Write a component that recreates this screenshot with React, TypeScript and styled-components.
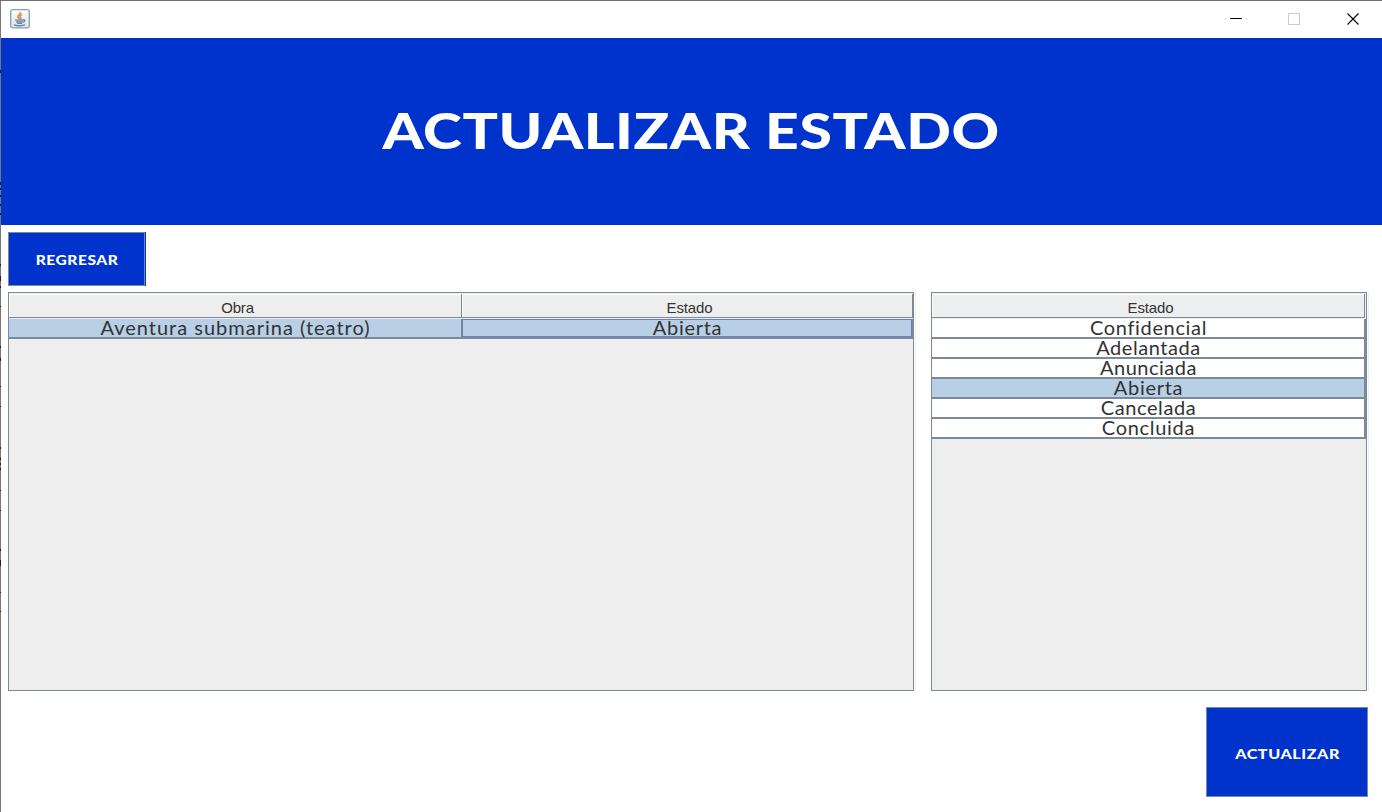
import React from "react";
import styled, { createGlobalStyle } from "styled-components";

const BLUE = "#0033cc";
const LINE = "#7a8a99";
const EDGE = "#777";

/* Rows where darker content behind the window shows at its left edge: [top, height] */
const edgeMarks = [
  [69, 3], [181, 3], [187, 2], [194, 2], [203, 2], [212, 2], [263, 2], [275, 5],
  [285, 2], [305, 1], [345, 2], [357, 3], [385, 1], [405, 1], [446, 2], [457, 2],
  [462, 2], [467, 2], [489, 1], [509, 1], [548, 2], [559, 6], [591, 1], [610, 1],
];

const edgeGradient = edgeMarks
  .map(([y, h]) => `${EDGE} ${y}px, #1c1c22 ${y}px, #1c1c22 ${y + h}px, ${EDGE} ${y + h}px`)
  .join(", ");

const GlobalStyle = createGlobalStyle`
  * { box-sizing: border-box; }
  body { margin: 0; background: #fff; }
`;

const Window = styled.div`
  width: 1382px;
  height: 812px;
  overflow: hidden;
  background: linear-gradient(${edgeGradient}) 0 0 / 1px 100% no-repeat #fff;
  border-top: 1px solid #6f6f6f;
  padding-left: 1px;
  display: flex;
  flex-direction: column;
`;

const TitleBar = styled.div`
  height: 37px;
  flex: none;
  display: flex;
  justify-content: space-between;
  padding-left: 9px;
`;

const AppIcon = styled.svg`
  margin-top: 8px;
`;

const Controls = styled.svg`
  display: block;
`;

const Banner = styled.header`
  height: 187px;
  flex: none;
  background: ${BLUE};
  display: flex;
  align-items: center;
  justify-content: center;
  padding-bottom: 3px;
`;

const Title = styled.h1`
  margin: 0;
  color: #fff;
  font: 900 49px/60px Lato, sans-serif;
  letter-spacing: 0.5px;
  white-space: nowrap;
  transform: scaleX(1.2);
`;

const Button = styled.button<{ $w: number; $h: number }>`
  width: ${(p) => p.$w}px;
  height: ${(p) => p.$h}px;
  padding: 0;
  border: 1px solid ${LINE};
  border-radius: 0;
  background: ${BLUE};
  color: #fff;
  font: 900 14px/20px Lato, sans-serif;
`;

const Label = styled.span<{ $stretch: number; $drop: number }>`
  display: block;
  padding-top: ${(p) => p.$drop}px;
  padding-left: 1px;
  letter-spacing: 0.5px;
  transform: scaleX(${(p) => p.$stretch});
`;

const BackSlot = styled.div`
  align-self: flex-start;
  margin: 7px 0 6px 7px;
  display: flex;
  border-right: 1px solid ${BLUE};
`;

const Tables = styled.main`
  display: flex;
  gap: 17px;
  padding-left: 7px;
`;

const Pane = styled.section<{ $w: number }>`
  width: ${(p) => p.$w}px;
  height: 399px;
  border: 1px solid ${LINE};
  background: #eee;
  box-shadow: 1px 0 0 #fff, 2px 0 0 #eee;
`;

const HeadRow = styled.div`
  display: flex;
  height: 26px;
  padding-top: 1px;
`;

const HeadCell = styled.div<{ $w: number }>`
  width: ${(p) => p.$w}px;
  height: 24px;
  padding-left: 5px;
  border-right: 1px solid ${LINE};
  border-bottom: 1px solid ${LINE};
  box-shadow: inset 1px 1px 0 #fff;
  color: #333;
  font: 15px/27px "Liberation Sans", Arial, sans-serif;
  letter-spacing: -0.15px;
  text-align: center;
`;

const Row = styled.div<{ $selected?: boolean; $edge: number }>`
  display: flex;
  height: 20px;
  border-bottom: 2px solid ${LINE};
  border-right: ${(p) => p.$edge}px solid ${LINE};
  background: ${(p) => (p.$selected ? "#b8cfe5" : "#fff")};
`;

const Cell = styled.div<{ $w: number; $spacing: number; $line?: boolean; $focus?: boolean }>`
  width: ${(p) => p.$w}px;
  height: 18px;
  display: flex;
  align-items: center;
  justify-content: center;
  padding: 0 0 2px 1px;
  border-right: ${(p) => (p.$line ? `1px solid ${LINE}` : "0")};
  box-shadow: ${(p) => (p.$focus ? "inset 0 0 0 1px #6382bf" : "none")};
  color: #333;
  font: 20px/16px Lato, sans-serif;
  letter-spacing: ${(p) => p.$spacing}px;
  white-space: nowrap;
`;

const Footer = styled.footer`
  display: flex;
  justify-content: flex-end;
  padding: 16px 14px 0 0;
`;

const states = [
  { name: "Confidencial", spacing: 0.65 },
  { name: "Adelantada", spacing: 0.55 },
  { name: "Anunciada", spacing: 0.5 },
  { name: "Abierta", spacing: 0.7 },
  { name: "Cancelada", spacing: 0.6 },
  { name: "Concluida", spacing: 0.7 },
];

const JavaIcon = () => (
  <AppIcon width="20" height="20" viewBox="0 0 20 20" fill="none">
    <defs>
      <linearGradient id="tile" x1="0" y1="0" x2="0" y2="1">
        <stop offset="0" stopColor="#fdfdfd" />
        <stop offset="1" stopColor="#dce2e7" />
      </linearGradient>
    </defs>
    <rect x="0.7" y="0.7" width="18.6" height="18.2" rx="1.8" fill="url(#tile)" stroke="#8ba0b2" strokeWidth="1.3" />
    <path d="M10.4 3c.8 2.2-3 3.1-2.4 5 .2.9 1.3 1.4 1.5 2.4M12 5.4c-2 1-2.6 2-1.4 3.2.7.8.2 1.4-.5 2" stroke="#e98b45" strokeWidth="1.7" />
    <path d="M5 11.2h8M6 12.8h6.6M7 14.3h5M13 10.8c2.4-.5 2.6 1.8-.6 2.5M4 15.9c2.7 1.2 8.5 1.1 11-.2" stroke="#6488a8" strokeWidth="1.3" />
  </AppIcon>
);

export default function App() {
  return (
    <Window>
      <GlobalStyle />
      <TitleBar>
        <JavaIcon />
        <Controls width="182" height="37" fill="none" shapeRendering="crispEdges">
          <path d="M30 17.5h12" stroke="#000" />
          <rect x="88.5" y="12.5" width="11" height="11" stroke="#ccc" />
          <path d="M147.5 12.5l11 11M158.5 12.5l-11 11" stroke="#000" strokeWidth="1.1" shapeRendering="auto" />
        </Controls>
      </TitleBar>
      <Banner>
        <Title>ACTUALIZAR ESTADO</Title>
      </Banner>
      <BackSlot>
        <Button $w={137} $h={54}>
          <Label $stretch={1.11} $drop={2}>REGRESAR</Label>
        </Button>
      </BackSlot>
      <Tables>
        <Pane $w={906}>
          <HeadRow>
            <HeadCell $w={453}>Obra</HeadCell>
            <HeadCell $w={451}>Estado</HeadCell>
          </HeadRow>
          <Row $selected $edge={1}>
            <Cell $w={453} $spacing={1} $line>Aventura submarina (teatro)</Cell>
            <Cell $w={450} $spacing={0.7} $focus>Abierta</Cell>
          </Row>
        </Pane>
        <Pane $w={436}>
          <HeadRow>
            <HeadCell $w={433}>Estado</HeadCell>
          </HeadRow>
          {states.map((s) => (
            <Row key={s.name} $selected={s.name === "Abierta"} $edge={2}>
              <Cell $w={432} $spacing={s.spacing}>{s.name}</Cell>
            </Row>
          ))}
        </Pane>
      </Tables>
      <Footer>
        <Button $w={162} $h={90}>
          <Label $stretch={1.15} $drop={4}>ACTUALIZAR</Label>
        </Button>
      </Footer>
    </Window>
  );
}
